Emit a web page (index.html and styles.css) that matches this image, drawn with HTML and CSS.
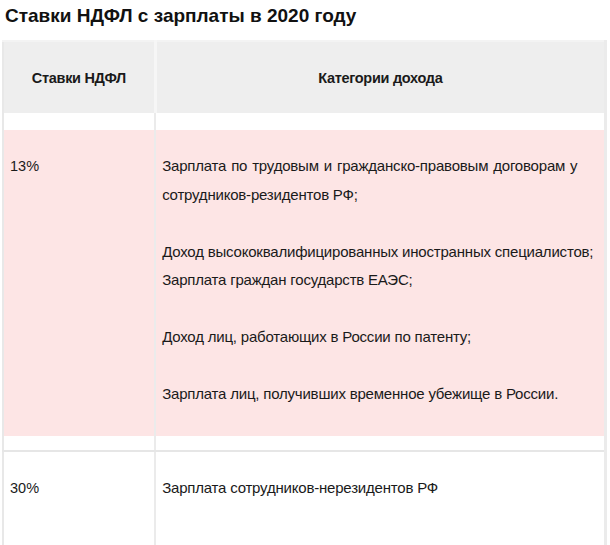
FILE: index.html
```html
<!DOCTYPE html>
<html lang="ru">
<head>
<meta charset="utf-8">
<link rel="stylesheet" href="styles.css">
</head>
<body>
<h1 class="title">Ставки НДФЛ с зарплаты в 2020 году</h1>
<table class="rates">
  <colgroup><col class="c1"><col class="c2"></colgroup>
  <tr class="head">
    <th>Ставки НДФЛ</th>
    <th>Категории дохода</th>
  </tr>
  <tr class="gap gap-top"><td></td><td></td></tr>
  <tr class="pink">
    <td class="rate">13%</td>
    <td class="desc"><span class="wide">Зарплата по трудовым и гражданско-правовым договорам у</span><br>сотрудников-резидентов РФ;<br><br>Доход высококвалифицированных иностранных специалистов;<br>Зарплата граждан государств ЕАЭС;<br><br>Доход лиц, работающих в России по патенту;<br><br>Зарплата лиц, получивших временное убежище в России.</td>
  </tr>
  <tr class="gap gap-bottom"><td></td><td></td></tr>
  <tr class="plain">
    <td class="rate">30%</td>
    <td class="desc">Зарплата сотрудников-нерезидентов РФ</td>
  </tr>
</table>
</body>
</html>
```
FILE: styles.css
```css
html, body {
  margin: 0;
  padding: 0;
  background: #ffffff;
}
body {
  font-family: "Liberation Sans", Arial, sans-serif;
  color: #1a1a1a;
}
.title {
  margin: 0;
  padding: 5px 0 0 5px;
  height: 40px;
  box-sizing: border-box;
  font-size: 19px;
  line-height: 22px;
  font-weight: bold;
  color: #111111;
}
.rates {
  margin-left: 2px;
  width: 605px;
  border-collapse: collapse;
  table-layout: fixed;
  border-top: 2px solid #f3f3f3;
  border-left: 2px solid #e8e8e8;
  border-right: 3px solid #ebebeb;
}
.c1 { width: 152px; }
.c2 { width: 450px; }
.rates td, .rates th {
  padding: 0;
  vertical-align: top;
}
.rates td + td, .rates th + th {
  border-left: 2px solid #ebebeb;
}
.head th {
  height: 71px;
  background: #eeeeee;
  font-size: 14.5px;
  font-weight: bold;
  letter-spacing: -0.3px;
  color: #1a1a1a;
  vertical-align: middle;
  text-align: center;
}
.head th + th {
  border-left: 3px solid #f6f6f6;
}
.gap-top td { height: 17px; }
.gap-bottom td {
  height: 14px;
  border-bottom: 2px solid #e6e6e6;
}
.pink td {
  background: #fde5e5;
}
.rate {
  padding: 22px 0 0 6px !important;
  font-size: 14.5px;
  line-height: 28.5px;
}
.desc {
  padding: 22px 2px 27px 6px !important;
  font-size: 15px;
  line-height: 28.5px;
  letter-spacing: -0.2px;
}
.wide {
  word-spacing: 1px;
}
.plain td {
  height: 78px;
}
```
